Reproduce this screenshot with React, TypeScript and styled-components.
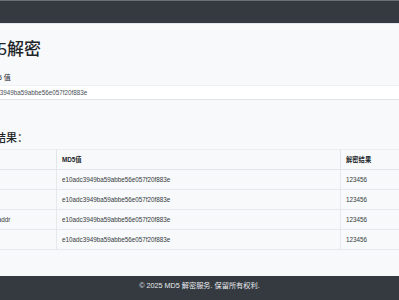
import styled, { createGlobalStyle } from 'styled-components'

const GlobalStyle = createGlobalStyle`
  html, body {
    margin: 0;
    padding: 0;
    overflow: hidden;
    background: #f8f9fa;
    font-family: "Liberation Sans", "Noto Sans CJK SC", sans-serif;
    color: #212529;
  }
`

const rows = [
  { plain: 'admin', hash: 'e10adc3949ba59abbe56e057f20f883e', result: '123456' },
  { plain: 'root', hash: 'e10adc3949ba59abbe56e057f20f883e', result: '123456' },
  { plain: 'user@addr', hash: 'e10adc3949ba59abbe56e057f20f883e', result: '123456' },
  { plain: 'test', hash: 'e10adc3949ba59abbe56e057f20f883e', result: '123456' },
]

const App = () => {
  return (
    <Page>
      <GlobalStyle />
      <NavBar />
      <Main>
        <Content>
          <Title>MD5解密</Title>
          <FormGroup>
            <Label>MD5 值</Label>
            <HashInput defaultValue='e10adc3949ba59abbe56e057f20f883e' />
          </FormGroup>
          <SubTitle>解密结果：</SubTitle>
          <Table>
            <colgroup>
              <col style={{ width: 83 }} />
              <col style={{ width: 284 }} />
              <col style={{ width: 86 }} />
            </colgroup>
            <thead>
              <tr>
                <Th>原文</Th>
                <Th>MD5值</Th>
                <Th>解密结果</Th>
              </tr>
            </thead>
            <tbody>
              {rows.map((r, i) => (
                <tr key={i}>
                  <Td>{r.plain}</Td>
                  <Td>{r.hash}</Td>
                  <Td>{r.result}</Td>
                </tr>
              ))}
            </tbody>
          </Table>
        </Content>
      </Main>
      <Footer>© 2025 MD5 解密服务. 保留所有权利.</Footer>
    </Page>
  )
}

export default App

const Page = styled.div`
  width: 399px;
  display: flex;
  flex-direction: column;
`

const NavBar = styled.header`
  height: 22px;
  background: #343a40;
  border-top: 1px solid #6c7178;
  border-bottom: 1px solid #e1e8ef;
`

const Main = styled.main`
  display: flex;
  flex-direction: column;
  align-items: center;
  padding: 15px 0 26px;
`

const Content = styled.div`
  width: 453px;
  flex-shrink: 0;
  display: flex;
  flex-direction: column;
`

const Title = styled.h1`
  margin: 0 0 14px -2px;
  font-size: 17px;
  font-weight: 500;
  line-height: 21px;
`

const FormGroup = styled.div`
  display: flex;
  flex-direction: column;
`

const Label = styled.label`
  padding-left: 14px;
  font-size: 7px;
  line-height: 8px;
  margin-bottom: 3px;
`

const HashInput = styled.input`
  box-sizing: border-box;
  height: 15px;
  padding: 0 5px;
  border: 1px solid #eef0f2;
  border-bottom-color: #dfe3e7;
  background: #fff;
  font-family: "Liberation Sans", sans-serif;
  font-size: 6.3px;
  color: #495057;
  outline: none;
`

const SubTitle = styled.h4`
  margin: 32px 0 4px;
  font-size: 11px;
  font-weight: 500;
  line-height: 13px;
`

const Table = styled.table`
  width: 453px;
  table-layout: fixed;
  border-collapse: collapse;
  font-size: 6.3px;
`

const Th = styled.th`
  height: 19px;
  padding: 0 5px;
  text-align: left;
  font-weight: 700;
  color: #212529;
  border: 1px solid #e3e6e9;
  border-top-color: #eceef0;
`

const Td = styled.td`
  height: 19px;
  padding: 0 5px;
  color: #343a40;
  border: 1px solid #e6e8eb;
  white-space: nowrap;
`

const Footer = styled.footer`
  background: #343a40;
  color: #e9ecef;
  text-align: center;
  font-size: 7.2px;
  line-height: 9px;
  padding: 5px 0 12px;
`
